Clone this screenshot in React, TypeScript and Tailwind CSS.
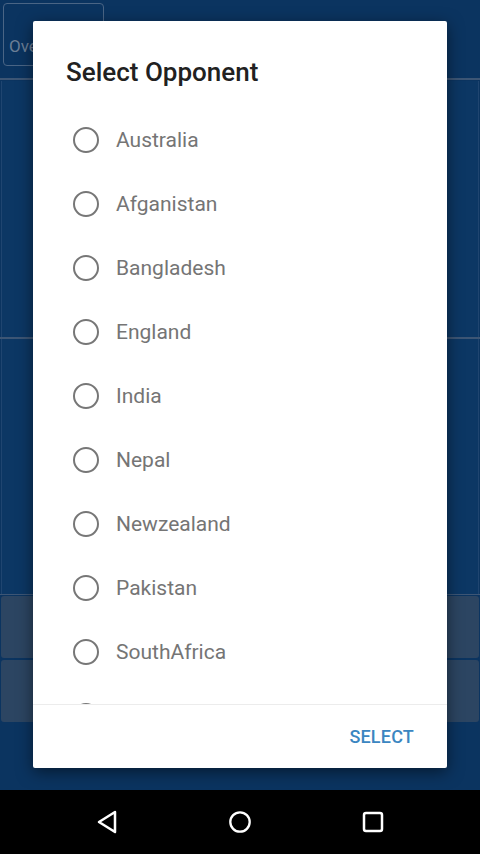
import React from "react";

const countries = [
  "Australia",
  "Afganistan",
  "Bangladesh",
  "England",
  "India",
  "Nepal",
  "Newzealand",
  "Pakistan",
  "SouthAfrica",
  "Srilanka",
];

export default function App() {
  return (
    <div
      className="relative w-[480px] h-[854px] overflow-hidden bg-[#0b3460] flex flex-col"
      style={{ fontFamily: "Roboto, 'Noto Sans', sans-serif" }}
    >
      {/* background app */}
      <div className="h-[80px] border-b-2 border-[#3d5675] px-[3px] pt-[3px]">
        <div className="w-[101px] h-[63px] rounded-[4px] border border-[#4a6585] flex items-end pb-[6px] pl-[5px]">
          <span className="text-[17px] text-[#6c7f96]">Overs</span>
        </div>
      </div>
      <div className="h-[256px] mt-[1px] mx-[1px] bg-[#0c3764] border-l border-r border-[#1f4570]" />
      <div className="h-[2px] bg-[#3d5675]" />
      <div className="h-[255px] mx-[1px] bg-[#0c3764] border-l border-r border-[#1f4570]" />
      <div className="h-[1px] bg-[#3d5675]" />
      <div className="flex flex-col gap-[2px] px-[1px] pt-[1px]">
        <div className="h-[62px] rounded-[3px] bg-[#2c4562]" />
        <div className="h-[62px] rounded-[3px] bg-[#2c4562]" />
      </div>
      <div className="flex-1 bg-[#0b3460]" />
      <div className="h-[64px] bg-black flex items-center justify-center gap-[109px]">
        <div className="w-[24px] flex justify-center">
          <svg width="24" height="28" viewBox="0 0 24 28">
            <path d="M20 4 L4 14 L20 24 Z" fill="none" stroke="white" strokeWidth="2.5" strokeLinejoin="round" />
          </svg>
        </div>
        <div className="w-[24px] flex justify-center">
          <svg width="26" height="26" viewBox="0 0 26 26">
            <circle cx="13" cy="13" r="10.5" fill="none" stroke="white" strokeWidth="2.5" />
          </svg>
        </div>
        <div className="w-[24px] flex justify-center">
          <svg width="24" height="24" viewBox="0 0 24 24">
            <rect x="3" y="3" width="18" height="18" rx="2" fill="none" stroke="white" strokeWidth="2.5" />
          </svg>
        </div>
      </div>

      {/* dialog */}
      <div className="absolute left-[33px] top-[21px] w-[414px] h-[747px] bg-white rounded-[2px] shadow-[0_4px_16px_rgba(0,0,0,0.5)] flex flex-col">
        <div className="h-[87px] pl-[33px] pt-[34px]">
          <div className="text-[26px] leading-[34px] font-medium text-[#212121]">Select Opponent</div>
        </div>
        <div className="h-[596px] overflow-hidden">
          {countries.map((c) => (
            <div key={c} className="h-[64px] flex items-center pl-[40px]">
              <div className="w-[26px] h-[26px] rounded-full border-2 border-[#777777] shrink-0" />
              <span className="ml-[17px] text-[21px] leading-[28px] text-[#757575]">{c}</span>
            </div>
          ))}
        </div>
        <div className="h-[1px] bg-[#ececec]" />
        <div className="flex-1 flex items-center justify-end pr-[33px]">
          <span className="text-[18px] font-medium tracking-[0.2px] text-[#3b86c1]">SELECT</span>
        </div>
      </div>
    </div>
  );
}
